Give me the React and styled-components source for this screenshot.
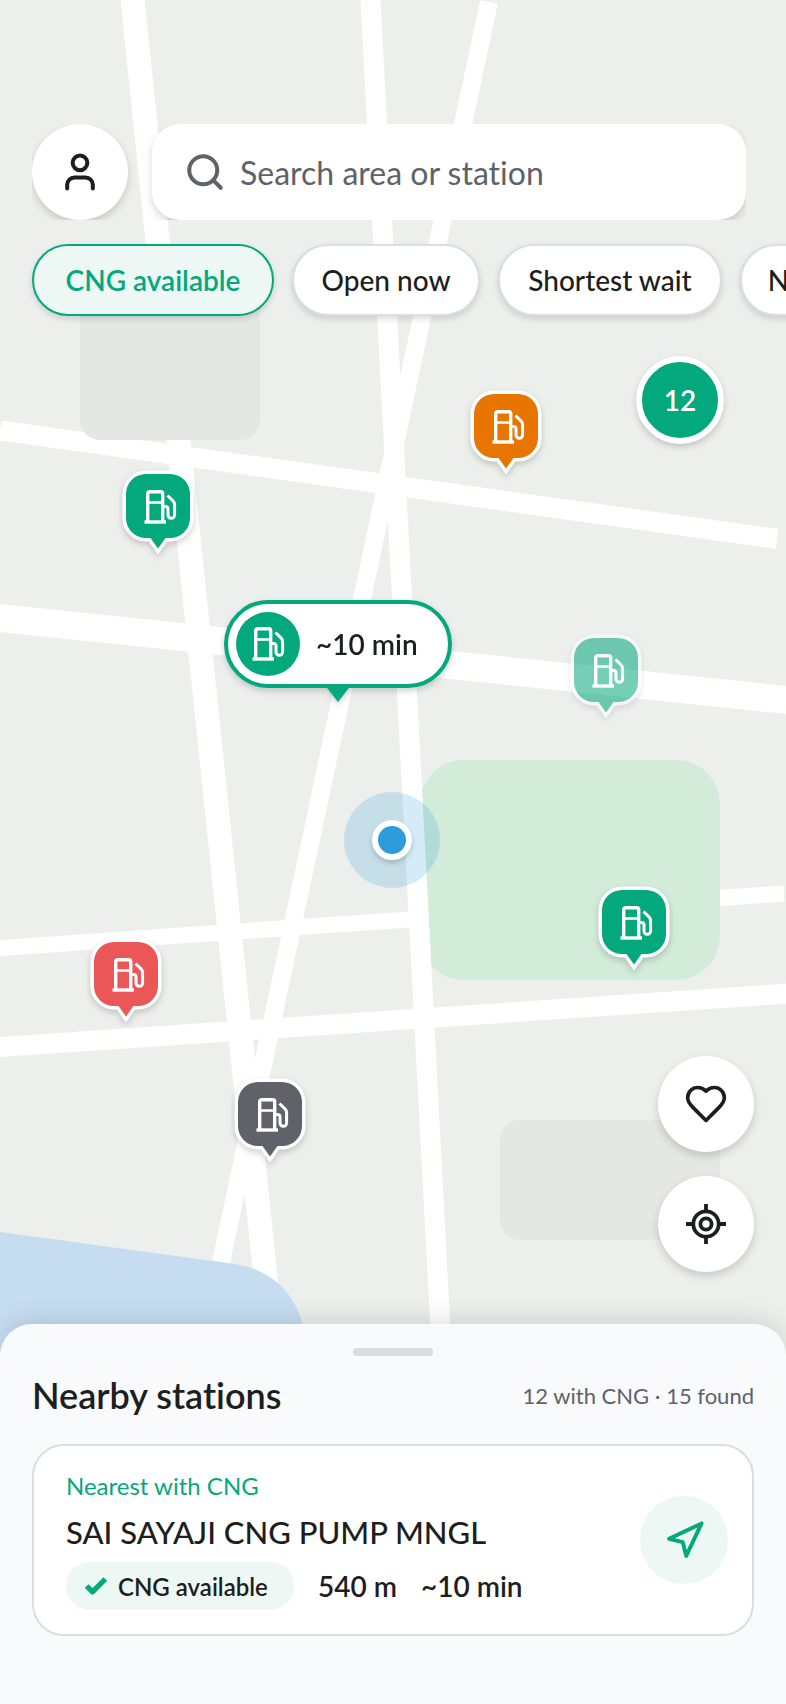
import React from 'react'
import styled, { createGlobalStyle } from 'styled-components'
import { Search, User, Navigation, Check } from 'lucide-react'

const GREEN = '#03a87c'

const filters = [
    { label: 'CNG available', width: 242, active: true },
    { label: 'Open now', width: 188 },
    { label: 'Shortest wait', width: 224 },
    { label: 'Nearest', width: 152 },
]

const pins = [
    { x: 122, y: 470, color: GREEN, name: 'CNG available' },
    { x: 470, y: 390, color: '#e87500', name: 'Long wait' },
    { x: 570, y: 634, color: GREEN, name: 'CNG likely available', faded: true },
    { x: 598, y: 886, color: GREEN, name: 'CNG available' },
    { x: 90, y: 938, color: '#eb5757', name: 'No CNG' },
    { x: 234, y: 1078, color: '#5f6269', name: 'Closed' },
]

function PumpIcon() {
    return (
        <g fill="none" stroke="#fff" strokeWidth="3.4">
            <path d="M3.700 32V4.700a2 2 0 0 1 2-2h11a2 2 0 0 1 2 2V32" />
            <path d="M0.500 33H22" />
            <path d="M4 13.500h14.500" strokeWidth="2.600" />
            <path d="M19 17.500h2.500a2.500 2.500 0 0 1 2.500 2.500v6a3.200 3.200 0 0 0 6.600 0V15.500a5 5 0 0 0-1.600-3.700L23.500 6.500" strokeWidth="3" />
        </g>
    )
}

function MapDrawing() {
    return (
        <Drawing viewBox="0 0 786 1704" preserveAspectRatio="xMidYMin slice" aria-hidden="true">
            <g stroke="#fff" fill="none">
                <path d="M0 430.500L777 539" strokeWidth="20" />
                <path d="M-10 617L796 701" strokeWidth="28" />
                <path d="M0 948L784 893.500" strokeWidth="16" />
                <path d="M-10 1047.700L796 993" strokeWidth="20" />
                <path d="M131.500 -10L272 1340" strokeWidth="24" />
                <path d="M489 2L221 1262" strokeWidth="18" />
            </g>
            <rect x="80" y="260" width="180" height="180" rx="20" fill="#e5e7e4" />
            <rect x="500" y="1120" width="220" height="120" rx="20" fill="#e5e7e4" />
            <rect x="420" y="760" width="300" height="220" rx="44" fill="#d3ebd9" />
            <path d="M370 -10L441 1340" stroke="#fff" strokeWidth="20" />
            <path d="M0 1232L235 1264C272 1270 298 1294 304 1332V1400H0Z" fill="#c6ddf1" />
        </Drawing>
    )
}

function StationPin({ x, y, color, name, faded }) {
    return (
        <Pin $x={x} $y={y} $faded={faded} aria-label={name}>
            <svg width="72" height="86" viewBox="0 0 72 86">
                <path
                    d="M24 4H48A20 20 0 0 1 68 24V48A20 20 0 0 1 48 68H43.500L36 78.500L28.500 68H24A20 20 0 0 1 4 48V24A20 20 0 0 1 24 4Z"
                    fill={color}
                    stroke="#fff"
                    strokeWidth="7"
                    paintOrder="stroke"
                />
                <g transform="translate(22 19)">
                    <PumpIcon />
                </g>
            </svg>
        </Pin>
    )
}

function App() {
    return (
        <Page>
            <GlobalStyle />
            <MapLayer>
                <MapDrawing />
                <Halo>
                    <Dot />
                </Halo>
                {pins.map((pin) => (
                    <StationPin key={`${pin.x}-${pin.y}`} {...pin} />
                ))}
                <Cluster>12</Cluster>
                <Bubble>
                    <BubbleIcon>
                        <svg width="36" height="36" viewBox="0 0 36 36">
                            <PumpIcon />
                        </svg>
                    </BubbleIcon>
                    ~10 min
                </Bubble>
            </MapLayer>

            <TopBar>
                <RoundButton aria-label="Profile">
                    <User size={44} strokeWidth={2.200} />
                </RoundButton>
                <SearchBox>
                    <Search size={42} strokeWidth={2.300} />
                    <SearchInput type="text" aria-label="Search" placeholder="Search area or station" />
                </SearchBox>
            </TopBar>
            <Filters>
                {filters.map((filter) => (
                    <Filter key={filter.label} $width={filter.width} $active={filter.active}>
                        {filter.label}
                    </Filter>
                ))}
            </Filters>

            <MapButtons>
                <RoundButton aria-label="Favourites">
                    <svg width="44" height="44" viewBox="0 0 24 24" fill="none" stroke="currentColor" strokeWidth="2" strokeLinejoin="round">
                        <path d="M19 14c1.490-1.460 3-3.210 3-5.500A5.500 5.500 0 0 0 16.500 3c-1.760 0-3 .5-4.500 2-1.500-1.500-2.740-2-4.500-2A5.500 5.500 0 0 0 2 8.500c0 2.300 1.500 4.050 3 5.500l7 7Z" />
                    </svg>
                </RoundButton>
                <RoundButton aria-label="My location">
                    <svg width="40" height="40" viewBox="0 0 40 40" fill="none" stroke="currentColor" strokeWidth="3.800">
                        <circle cx="20" cy="20" r="12.700" />
                        <circle cx="20" cy="20" r="5.600" />
                        <path d="M20 0v7M20 33v7M0 20h7M33 20h7" />
                    </svg>
                </RoundButton>
            </MapButtons>

            <Sheet>
                <Handle />
                <SheetHeader>
                    <Title>Nearby stations</Title>
                    <Count>12 with CNG · 15 found</Count>
                </SheetHeader>
                <Card>
                    <CardBody>
                        <Eyebrow>Nearest with CNG</Eyebrow>
                        <StationName>SAI SAYAJI CNG PUMP MNGL</StationName>
                        <Details>
                            <Status>
                                <Check size={28} strokeWidth={4.500} color={GREEN} strokeLinecap="butt" />
                                CNG available
                            </Status>
                            <span>540 m</span>
                            <span>~10 min</span>
                        </Details>
                    </CardBody>
                    <GoButton aria-label="Get directions">
                        <Navigation size={41} strokeWidth={2.300} />
                    </GoButton>
                </Card>
            </Sheet>
        </Page>
    )
}

export default App

const GlobalStyle = createGlobalStyle`
    * {
        box-sizing: border-box;
    }
    body {
        margin: 0;
        color: #1d1e20;
        font-family: Lato, "Liberation Sans", sans-serif;
        font-variant-ligatures: none;
    }
    button, input {
        font-family: inherit;
        font-variant-ligatures: inherit;
        color: inherit;
    }
    svg {
        display: block;
        flex-shrink: 0;
    }
`

const Page = styled.main`
    position: relative;
    display: flex;
    flex-direction: column;
    min-height: 100vh;
    padding-top: 124px;
    overflow: hidden;
    background: #edefec;
`

const MapLayer = styled.div`
    position: absolute;
    inset: 0;
`

const Drawing = styled.svg`
    width: 100%;
    height: 100%;
`

const Pin = styled.button`
    position: absolute;
    left: ${(props) => props.$x}px;
    top: ${(props) => props.$y}px;
    padding: 0;
    border: none;
    background: none;
    opacity: ${(props) => (props.$faded ? 0.55 : 1)};
    filter: drop-shadow(0 3px 3px rgba(0, 0, 0, 0.18));
    cursor: pointer;
`

const Cluster = styled.button`
    position: absolute;
    left: 636px;
    top: 356px;
    width: 88px;
    height: 88px;
    padding: 0;
    border: 6px solid #fff;
    border-radius: 50%;
    background: ${GREEN};
    color: #fff;
    font-size: 28px;
    font-weight: 600;
    box-shadow: 0 3px 6px rgba(0, 0, 0, 0.18);
    cursor: pointer;
`

const Bubble = styled.button`
    position: absolute;
    left: 224px;
    top: 600px;
    display: flex;
    align-items: center;
    gap: 16px;
    width: 228px;
    height: 88px;
    padding: 0 8px;
    border: 4px solid ${GREEN};
    border-radius: 44px;
    background: #fff;
    font-size: 28px;
    font-weight: 600;
    filter: drop-shadow(0 3px 3px rgba(0, 0, 0, 0.18));
    cursor: pointer;

    &::after {
        content: '';
        position: absolute;
        left: 50%;
        top: 100%;
        margin-left: -14px;
        border: 14px solid transparent;
        border-top: 18px solid ${GREEN};
        border-bottom: none;
    }
`

const BubbleIcon = styled.span`
    display: flex;
    align-items: center;
    width: 64px;
    height: 64px;
    padding-left: 16px;
    border-radius: 50%;
    background: ${GREEN};
`

const Halo = styled.div`
    position: absolute;
    left: 344px;
    top: 792px;
    display: flex;
    align-items: center;
    justify-content: center;
    width: 96px;
    height: 96px;
    border-radius: 50%;
    background: rgba(45, 156, 219, 0.2);
`

const Dot = styled.div`
    width: 40px;
    height: 40px;
    border: 6px solid #fff;
    border-radius: 50%;
    background: #2d9cdb;
    box-shadow: 0 3px 5px rgba(0, 0, 0, 0.18);
`

const TopBar = styled.header`
    position: relative;
    display: flex;
    gap: 24px;
    margin: 0 40px 0 32px;
    overflow: hidden;
`

const RoundButton = styled.button`
    display: flex;
    flex-shrink: 0;
    align-items: center;
    justify-content: center;
    width: 96px;
    height: 96px;
    padding: 0;
    border: none;
    border-radius: 50%;
    background: #fff;
    box-shadow: 0 4px 8px rgba(0, 0, 0, 0.16);
    cursor: pointer;
`

const SearchBox = styled.label`
    display: flex;
    flex: 1;
    align-items: center;
    gap: 14px;
    min-width: 0;
    padding: 0 32px;
    border-radius: 28px;
    background: #fff;
    color: #5f6269;
    box-shadow: 0 4px 8px rgba(0, 0, 0, 0.16);
`

const SearchInput = styled.input`
    flex: 1;
    min-width: 0;
    padding: 0;
    border: none;
    outline: none;
    background: none;
    font-size: 32px;

    &::placeholder {
        color: #5f6269;
        opacity: 1;
    }
`

const Filters = styled.nav`
    position: relative;
    display: flex;
    gap: 18px;
    padding: 24px 0 12px 32px;
    overflow: hidden;
`

const Filter = styled.button`
    flex-shrink: 0;
    width: ${(props) => props.$width}px;
    height: 72px;
    padding: 0;
    border: 2px solid ${(props) => (props.$active ? GREEN : '#dcdde0')};
    border-radius: 36px;
    background: ${(props) => (props.$active ? '#edf8f5' : '#fff')};
    color: ${(props) => (props.$active ? GREEN : '#1d1e20')};
    font-size: 28px;
    font-weight: ${(props) => (props.$active ? 600 : 500)};
    box-shadow: 0 3px 6px rgba(0, 0, 0, 0.14);
    cursor: pointer;
`

const MapButtons = styled.div`
    position: relative;
    display: flex;
    flex-direction: column;
    align-self: flex-end;
    gap: 24px;
    margin: auto 32px 52px;
`

const Sheet = styled.section`
    position: relative;
    padding: 24px 32px 68px;
    border-radius: 32px 32px 0 0;
    background: #f8fafc;
    box-shadow: 0 -4px 24px rgba(0, 0, 0, 0.12);
`

const Handle = styled.div`
    width: 80px;
    height: 8px;
    margin: 0 auto;
    border-radius: 4px;
    background: #dadbde;
`

const SheetHeader = styled.div`
    display: flex;
    align-items: center;
    justify-content: space-between;
    height: 78px;
    margin-bottom: 10px;
`

const Title = styled.h2`
    margin: 0;
    font-size: 36px;
    font-weight: 600;
`

const Count = styled.span`
    color: #5f6269;
    font-size: 22px;
`

const Card = styled.article`
    display: flex;
    align-items: center;
    justify-content: space-between;
    height: 192px;
    padding: 0 24px 0 32px;
    border: 2px solid #dcdde0;
    border-radius: 32px;
    background: #fff;
`

const CardBody = styled.div`
    display: flex;
    flex-direction: column;
`

const Eyebrow = styled.span`
    color: ${GREEN};
    font-size: 24px;
    line-height: 32px;
`

const StationName = styled.h3`
    margin: 6px 0;
    font-size: 31px;
    font-weight: 500;
    line-height: 48px;
`

const Details = styled.div`
    display: flex;
    align-items: center;
    gap: 24px;
    font-size: 28px;
    font-weight: 600;
`

const Status = styled.span`
    display: flex;
    align-items: center;
    gap: 8px;
    width: 228px;
    height: 48px;
    padding-left: 16px;
    border-radius: 24px;
    background: #edf8f5;
    font-size: 24px;
`

const GoButton = styled.button`
    display: flex;
    align-items: center;
    justify-content: center;
    width: 88px;
    height: 88px;
    padding: 0;
    border: none;
    border-radius: 50%;
    background: #edf8f5;
    color: ${GREEN};
    cursor: pointer;
`
